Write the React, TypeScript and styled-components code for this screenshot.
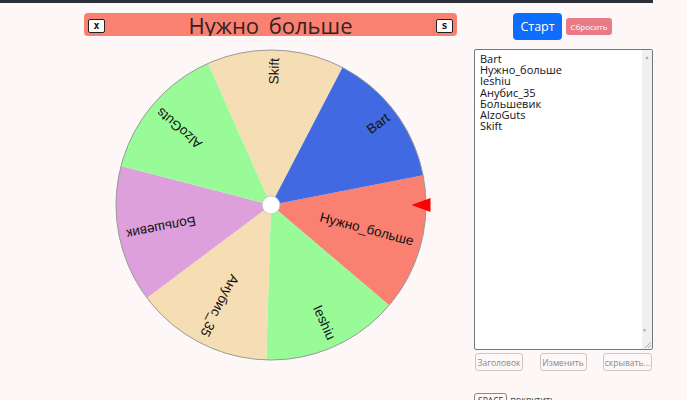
import React from "react";
import styled, { createGlobalStyle } from "styled-components";

const Global = createGlobalStyle`
  html, body { margin: 0; padding: 0; background: #fdf8f7; }
  body { font-family: "Open Sans", "Noto Sans", Arial, sans-serif; overflow: hidden; }
`;

const Page = styled.div`
  width: 653px;
  border-top: 3px solid #2b3038;
  display: flex;
  align-items: flex-start;
`;

const LeftCol = styled.div`
  width: 373px;
  padding-left: 84px;
  padding-right: 13px;
  padding-top: 10px;
  display: flex;
  flex-direction: column;
  align-items: center;
`;

const TitleBar = styled.div`
  width: 373px;
  height: 23px;
  box-sizing: border-box;
  background: #fa8072;
  border-radius: 4px;
  overflow: hidden;
  display: flex;
  align-items: center;
  justify-content: space-between;
  padding: 0 4px;
`;

const TinyBtn = styled.button`
  width: 17px;
  height: 14px;
  padding: 0;
  margin: 0;
  border: 1px solid #222;
  border-radius: 2px;
  background: #fff;
  font-family: "DejaVu Sans Mono", monospace;
  font-weight: bold;
  font-size: 10px;
  line-height: 11px;
  color: #111;
  margin-top: 2px;
`;

const Title = styled.div`
  flex: 1;
  text-align: center;
  font-size: 22px;
  line-height: 23px;
  height: 23px;
  color: #332323;
  padding-top: 2px;
  white-space: nowrap;
`;

const WheelSvg = styled.svg`
  display: block;
  margin-top: 13px;
`;

const RightCol = styled.div`
  width: 179px;
  margin-left: 4px;
  padding-top: 10px;
  display: flex;
  flex-direction: column;
`;

const ButtonRow = styled.div`
  display: flex;
  justify-content: center;
  align-items: center;
  gap: 4px;
  margin-left: -2px;
`;

const StartBtn = styled.button`
  width: 49px;
  height: 27px;
  border: none;
  border-radius: 4px;
  background: #0d6efd;
  color: #fff;
  font-family: "Open Sans", Arial, sans-serif;
  font-size: 12.5px;
  padding: 0;
`;

const ResetBtn = styled.button`
  width: 46px;
  height: 17px;
  border: none;
  border-radius: 3px;
  background: #e87b85;
  color: #fff;
  font-family: "Open Sans", Arial, sans-serif;
  font-size: 8px;
  padding: 0;
`;

const NamesBox = styled.div`
  margin-top: 9px;
  width: 179px;
  height: 301px;
  box-sizing: border-box;
  border: 1px solid #767676;
  border-radius: 2px;
  background: #fff;
  display: flex;
  overflow: hidden;
`;

const Names = styled.textarea`
  flex: 1;
  min-width: 0;
  border: none;
  outline: none;
  resize: none;
  background: transparent;
  padding: 3px 5px;
  font-family: "Open Sans", "Noto Sans", Arial, sans-serif;
  font-size: 11px;
  line-height: 11.2px;
  color: #111;
  overflow: hidden;
`;

const ScrollTrack = styled.div`
  width: 10px;
  background: #f0f0f0;
  display: flex;
  flex-direction: column;
  align-items: center;
  justify-content: space-between;
  padding-top: 3px;
`;

const Arrow = styled.span`
  font-size: 5px;
  line-height: 8px;
  color: #a3a3a3;
`;

const Grip = styled.svg`
  display: block;
  margin-top: 2px;
`;

const BottomRow = styled.div`
  margin-top: 3px;
  display: flex;
  justify-content: space-between;
  padding: 0 1px;
`;

const GhostBtn = styled.button<{ $w: number }>`
  width: ${(p) => p.$w}px;
  height: 18px;
  padding: 0;
  border: 1px solid #c8c8c8;
  border-radius: 3px;
  background: transparent;
  color: #888;
  font-family: "Open Sans", Arial, sans-serif;
  font-size: 8.5px;
`;

const Hint = styled.div`
  margin-top: 22px;
  display: flex;
  align-items: flex-start;
  gap: 3px;
  font-size: 9px;
  color: #444;
`;

const Kbd = styled.span`
  border: 1px solid #888;
  border-radius: 3px;
  padding: 1px 3px;
  font-size: 8.5px;
  line-height: 11px;
  color: #333;
`;

type Seg = { name: string; color: string };

const segs: Seg[] = [
  { name: "Нужно_больше", color: "#fa8072" },
  { name: "Ieshiu", color: "#98fb98" },
  { name: "Анубис_35", color: "#f5deb3" },
  { name: "Большевик", color: "#dda0dd" },
  { name: "AlzoGuts", color: "#98fb98" },
  { name: "Skift", color: "#f5deb3" },
  { name: "Bart", color: "#4169e1" },
];

const CX = 175;
const CY = 156;
const R = 155;
const START = -11.1;
const STEP = 360 / 7;

function pt(deg: number, r: number) {
  const a = (deg * Math.PI) / 180;
  return [CX + r * Math.cos(a), CY + r * Math.sin(a)];
}

const Wheel = () => (
  <WheelSvg width={350} height={312} viewBox="0 0 350 312">
    {segs.map((s, i) => {
      const a0 = START + i * STEP;
      const a1 = a0 + STEP;
      const [x0, y0] = pt(a0, R);
      const [x1, y1] = pt(a1, R);
      return (
        <path
          key={i}
          d={`M${CX},${CY} L${x0},${y0} A${R},${R} 0 0 1 ${x1},${y1} Z`}
          fill={s.color}
        />
      );
    })}
    <circle cx={CX} cy={CY} r={R} fill="none" stroke="#9a9a9a" strokeWidth={1} />
    {segs.map((s, i) => {
      const mid = START + i * STEP + STEP / 2;
      return (
        <text
          key={"t" + i}
          x={R - 8}
          y={0}
          transform={`translate(${CX},${CY}) rotate(${mid})`}
          textAnchor="end"
          dominantBaseline="middle"
          fontFamily="'Liberation Sans', Arial, sans-serif"
          fontSize={13.5}
          fill="#111"
        >
          {s.name}
        </text>
      );
    })}
    <circle cx={CX} cy={CY} r={9} fill="#fff" stroke="#bbb" strokeWidth={0.8} />
    <polygon points={`${CX + 140.5},${CY} ${CX + 159.5},${CY - 7} ${CX + 159.5},${CY + 7}`} fill="#f00" />
  </WheelSvg>
);

export default function App() {
  return (
    <>
      <Global />
      <Page>
        <LeftCol>
          <TitleBar>
            <TinyBtn>x</TinyBtn>
            <Title>Нужно_больше</Title>
            <TinyBtn>s</TinyBtn>
          </TitleBar>
          <Wheel />
        </LeftCol>
        <RightCol>
          <ButtonRow>
            <StartBtn>Старт</StartBtn>
            <ResetBtn>Сбросить</ResetBtn>
          </ButtonRow>
          <NamesBox>
            <Names
              defaultValue={"Bart\nНужно_больше\nIeshiu\nАнубис_35\nБольшевик\nAlzoGuts\nSkift"}
            />
            <ScrollTrack>
              <Arrow>▲</Arrow>
              <div>
                <Arrow>▼</Arrow>
                <Grip width={10} height={10} viewBox="0 0 10 10">
                  <path d="M9 3 L3 9 M9 6 L6 9" stroke="#9a9a9a" strokeWidth={0.8} />
                </Grip>
              </div>
            </ScrollTrack>
          </NamesBox>
          <BottomRow>
            <GhostBtn $w={48}>Заголовок</GhostBtn>
            <GhostBtn $w={47}>Изменить</GhostBtn>
            <GhostBtn $w={49}>скрывать...</GhostBtn>
          </BottomRow>
          <Hint>
            <Kbd>SPACE</Kbd>
            <span>покрутить</span>
          </Hint>
        </RightCol>
      </Page>
    </>
  );
}
